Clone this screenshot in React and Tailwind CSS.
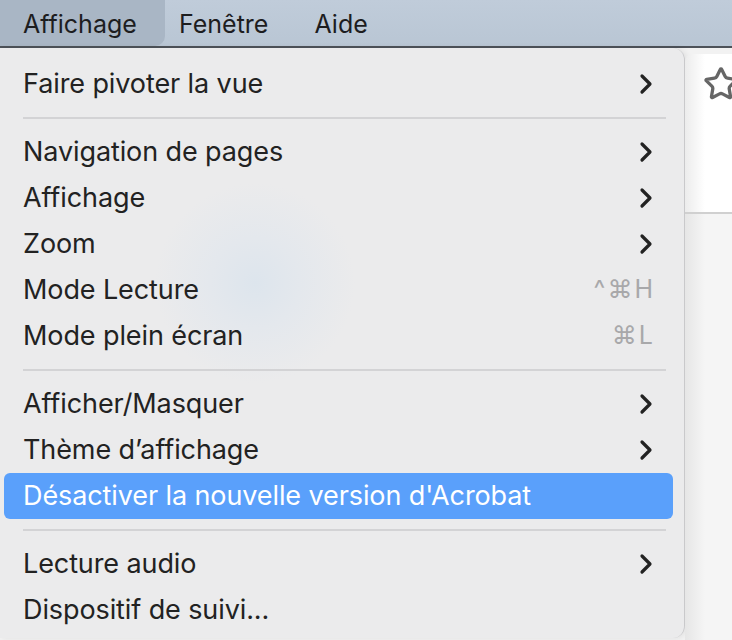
import { ChevronRight, Star } from "lucide-react";

const font = { fontFamily: "Inter, 'Noto Sans', sans-serif" };

function Row({ label, sub, shortcut, active }) {
  return (
    <div
      className={`ml-1 mr-[11px] flex h-[46px] items-center justify-between rounded-md pl-[19px] text-[27px] ${
        active ? "bg-[#5aa0fb] text-white" : "text-[#222]"
      } ${shortcut ? "pr-[18px]" : "pr-[11px]"}`}
    >
      <span className="tracking-[-0.1px]">{label}</span>
      {sub && <ChevronRight className="h-8 w-8 text-[#222]" strokeWidth={2.4} />}
      {shortcut && <span className="text-[25px] text-[#a8a8aa] tracking-[2px]">{shortcut}</span>}
    </div>
  );
}

function Sep() {
  return (
    <div className="flex h-[22px] items-center pl-[23px] pr-[18px]">
      <div className="h-[2px] w-full bg-[#d3d3d5]" />
    </div>
  );
}

export default function App() {
  return (
    <div className="h-[640px] w-[732px] overflow-hidden bg-[#f2f2f2]" style={font}>
      <div className="flex h-[48px] items-stretch border-b-[2px] border-[#4d5259] bg-[linear-gradient(#c0ccda,#b9c6d4)] pt-[3px] text-[25px] text-[#1d1d1f]">
        <div className="-mt-[3px] flex w-[165px] items-center rounded-br-[10px] bg-[#a9b6c5] pl-[23px] pt-[3px]">Affichage</div>
        <div className="flex items-center pl-[14px]">Fenêtre</div>
        <div className="flex items-center pl-[46px]">Aide</div>
      </div>
      <div className="flex">
        <div className="h-[590px] w-[685px] shrink-0 rounded-tr-[12px] rounded-br-[12px] border-r border-[#c9c9cb] bg-[radial-gradient(circle_at_255px_235px,#dde5ed_0,#e4e8ed_45px,#ebebec_100px)] pt-[13px] shadow-[2px_0_6px_rgba(0,0,0,0.08)]">
          <Row label="Faire pivoter la vue" sub />
          <Sep />
          <Row label="Navigation de pages" sub />
          <Row label="Affichage" sub />
          <Row label="Zoom" sub />
          <Row label="Mode Lecture" shortcut="^⌘H" />
          <Row label="Mode plein écran" shortcut="⌘L" />
          <Sep />
          <Row label="Afficher/Masquer" sub />
          <Row label="Thème d’affichage" sub />
          <Row label="Désactiver la nouvelle version d'Acrobat" active />
          <Sep />
          <Row label="Lecture audio" sub />
          <Row label="Dispositif de suivi..." />
        </div>
        <div className="min-w-0 flex-1 pt-[6px]">
          <div className="flex h-[160px] rounded-tl-[8px] border-b-2 border-[#d0d0d0] bg-[linear-gradient(90deg,#ececec,#ffffff_20px)] pl-[18px] pt-[12px]">
            <Star className="h-9 w-9 shrink-0 text-[#666]" strokeWidth={2.2} />
          </div>
          <div className="h-[430px] bg-[linear-gradient(90deg,#e6e6e6,#f5f5f5_20px)]" />
        </div>
      </div>
    </div>
  );
}
